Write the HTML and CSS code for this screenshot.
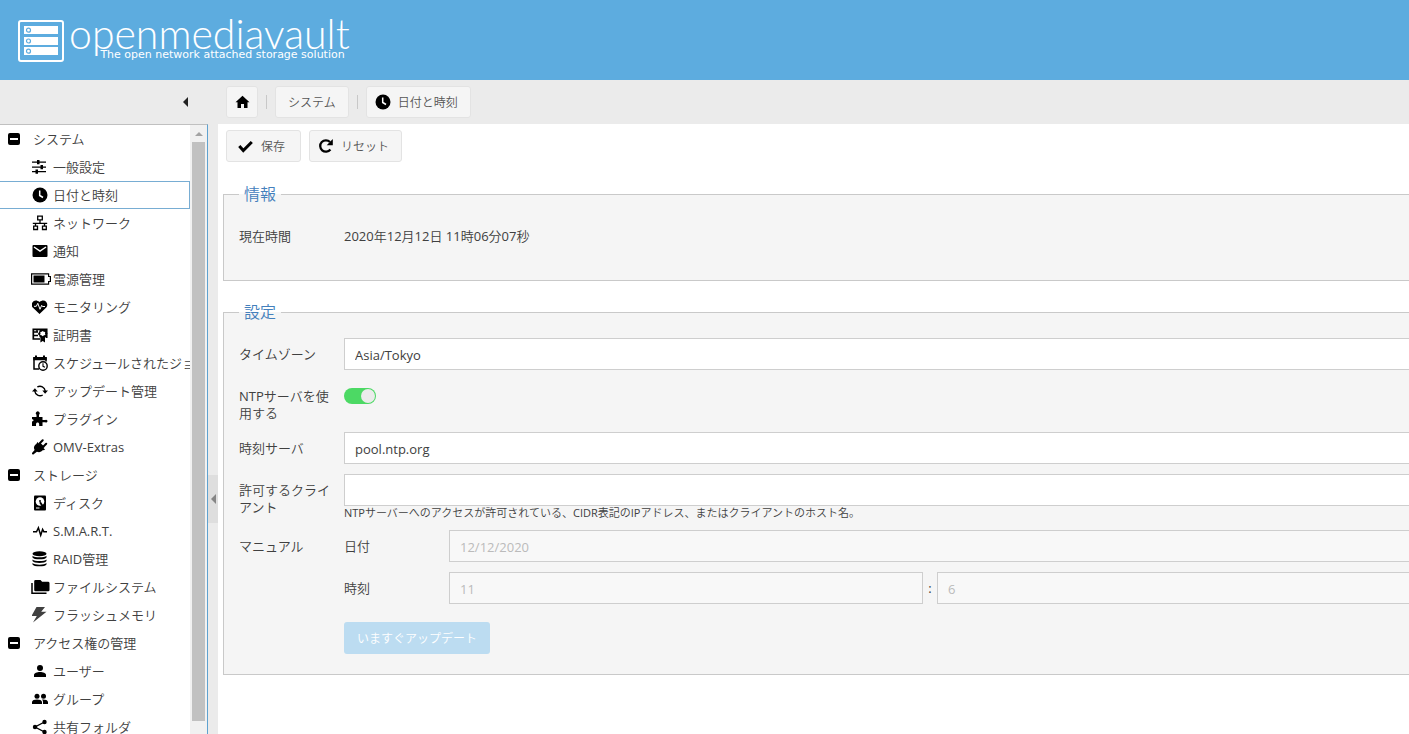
FILE: index.html
```html
<!DOCTYPE html>
<html lang="ja">
<head>
<meta charset="utf-8">
<meta name="viewport" content="width=device-width, initial-scale=1">
<title>openmediavault</title>
<link rel="stylesheet" href="styles.css">
</head>
<body class="app">
<svg class="sprite" aria-hidden="true">
  <symbol id="i-minus" viewBox="0 0 12 12"><rect width="12" height="12" rx="2"/><path d="M2 5h8v2H2z" fill="#fff"/></symbol>
  <symbol id="i-tune" viewBox="0 0 16 16"><path d="M0 2.500h5V1h2.500v1.500H14v1.200H7.500v1.500H5V3.700H0zM0 7.500h8.500V6H11v1.500h3v1.200h-3v1.500H8.500V8.700H0zM0 12h3.500v-1.500H6V12h8v1.200H6v1.500H3.500v-1.500H0z"/></symbol>
  <symbol id="i-clock" viewBox="0 0 16 16"><circle cx="8" cy="8" r="7.500"/><path d="M7.700 3.500v5l3.300 2" fill="none" stroke="#fff" stroke-width="1.500"/></symbol>
  <symbol id="i-network" viewBox="0 0 16 16"><path d="M5.700 1.200h4.600v3.600H5.700zM1.700 11.200h3.800v3.300H1.700zM10.500 11.200h3.800v3.300h-3.800zM8 5v3M.8 8.300h14.400M3.500 8.300V11M12.500 8.300V11" fill="none" stroke="#000" stroke-width="1.300"/></symbol>
  <symbol id="i-mail" viewBox="0 0 16 16"><rect x=".5" y="2" width="15" height="12" rx="1"/><path d="M2 4l6 4 6-4" fill="none" stroke="#fff" stroke-width="1.500"/></symbol>
  <symbol id="i-battery" viewBox="0 0 20 16"><path d="M.6 2.800h17v2.700h1.800v5h-1.800v2.700H.6z" fill="none" stroke="#000" stroke-width="1.200"/><path d="M2.500 4.500h11v7h-11z"/></symbol>
  <symbol id="i-heart" viewBox="0 0 16 16"><path d="M7.500 15L.7 8.600C-2.500 4.500 2.500-1.500 7.500 3c5-4.500 10 1.500 6.800 5.600z"/><path d="M2 7.300h2.300l1.500-3 2.200 6 1.700-4 .8 1.200H13" fill="none" stroke="#fff" stroke-width="1"/></symbol>
  <symbol id="i-cert" viewBox="0 0 16 16"><path d="M8 12H1.300V2.300h13.400V11" fill="none" stroke="#000" stroke-width="1.700"/><path d="M2 5h4M2 8.500h4M5 3v2" stroke="#000" stroke-width="1.500"/><path d="M10.500 2l1.500 1 1.800-.2.500 1.800 1.200 1.900-1.200 1.400-.4 2.300-.9.300V15.500L10.700 14l-2.300 1.500v-5l-.8-.3-.3-1.800L5.800 7l1.300-1.900.6-2 1.700-.1z"/><path d="M10.600 4l1.200.8 1.400.3-.2 1.500.4 1.300-1.400.4-1.300.9-1.200-.9-1.400-.4.400-1.300-.2-1.500 1.400-.3z" fill="#fff"/></symbol>
  <symbol id="i-schedule" viewBox="0 0 16 16"><path d="M7 14H2V3h12v3.500" fill="none" stroke="#000" stroke-width="1.500"/><path d="M1.300 2h13.400v3.300H1.300zM3 .5h2v3H3zM11 .5h2v3h-2z"/><circle cx="11" cy="11" r="4.200" fill="#fff" stroke="#000" stroke-width="1.400"/><path d="M11 8.300v3l2 1" fill="none" stroke="#000" stroke-width="1.100"/></symbol>
  <symbol id="i-sync" viewBox="0 0 16 16"><path d="M5.300 4a5.200 5.200 0 0 1 7.900 4M10.700 12a5.200 5.200 0 0 1-7.900-4" fill="none" stroke="#000" stroke-width="1.400"/><path d="M10.300 7.500H16l-2.900 3.300zM0 8.500h5.700L2.900 5.200z"/></symbol>
  <symbol id="i-plugin" viewBox="0 0 16 16"><path d="M0 6h4.500V3.700A1.900 1.900 0 1 1 7 3.700V6h3.500v3h2.700a1.400 1.400 0 1 1 0 2.200h-2.700V15H7.200v-1.500c0-2.600-3.200-2.600-3.200 0V15H0v-4.500c2 0 2-2.300 0-2.300z"/></symbol>
  <symbol id="i-plug" viewBox="0 0 16 16"><path d="M5.500 3l7.500 7.500-1.100.8-1-.2c-1.800 2.200-4 2.500-6 1.600L1 15.700-.3 14.400l2.900-3.400c-1.300-2-.6-4.500 1.700-6z"/><path d="M6.500 5l4.500 4.500 1.500-1.500-4.500-4.500z"/><path d="M8 4L10.700 1.300M11.500 7.500L14.200 4.800" stroke="#000" stroke-width="2" stroke-linecap="round"/></symbol>
  <symbol id="i-disk" viewBox="0 0 16 16"><rect x="2" y=".5" width="12" height="15" rx="1"/><circle cx="8" cy="6.500" r="4.300" fill="#fff"/><circle cx="8" cy="6" r="1"/><path d="M8 7.300l3.500 5" stroke="#000" stroke-width="2"/><path d="M4 13h3.500" stroke="#fff"/></symbol>
  <symbol id="i-pulse" viewBox="0 0 16 16"><path d="M1 8.700h3.500l1.900-4 2.300 7.500 1.900-5.800 1.200 2.300H15" fill="none" stroke="#000" stroke-width="1.500"/></symbol>
  <symbol id="i-db" viewBox="0 0 16 16"><ellipse cx="7.500" cy="2.800" rx="7" ry="2.500"/><path d="M.5 4.700c2 2.200 12 2.200 14 0v1.700C13.500 9 1.500 9 .5 6.400zM.5 8.400c2 2.200 12 2.200 14 0v1.700c-1 2.600-13 2.600-14 0zM.5 12.100c2 2.200 12 2.200 14 0v1.300c-1 2.600-13 2.600-14 0z"/></symbol>
  <symbol id="i-folders" viewBox="0 0 20 16"><path d="M4.500 1h5l1.600 1.700H17A1.500 1.500 0 0 1 18.500 4v7a1.300 1.300 0 0 1-1.300 1.300H4.500A1.300 1.300 0 0 1 3.200 11V2.300A1.300 1.300 0 0 1 4.500 1z"/><path d="M1 4v10.300h14.500" fill="none" stroke="#000" stroke-width="1.500"/></symbol>
  <symbol id="i-flash" viewBox="0 0 16 16"><path d="M4.500 0h8.500L9.200 4.800h5.300L1 15.500 4.800 9H-.5z" fill="#404040"/></symbol>
  <symbol id="i-user" viewBox="0 0 16 16"><circle cx="8" cy="5" r="3"/><path d="M2 14v-2c0-4 12-4 12 0v2z"/></symbol>
  <symbol id="i-users" viewBox="0 0 16 16"><circle cx="5" cy="5.300" r="2.500"/><circle cx="11.500" cy="5.300" r="2.500"/><path d="M0 13v-2c0-3.300 10-3.300 10 0v2zM11 13v-2.200c0-.9-.4-1.600-1-2.200 2.500-.3 6 .5 6 2.400v2z"/></symbol>
  <symbol id="i-share" viewBox="0 0 16 16"><circle cx="12.500" cy="3" r="2.200"/><circle cx="3" cy="8" r="2.200"/><circle cx="12.500" cy="13" r="2.200"/><path d="M12.500 3L3 8l9.500 5" fill="none" stroke="#000" stroke-width="1.400"/></symbol>
  <symbol id="i-home" viewBox="0 0 16 16"><path d="M8.500 1.800l7 6.500h-2V14H10v-4H7v4H3.500V8.300h-2z"/></symbol>
  <symbol id="i-check" viewBox="0 0 16 16"><path d="M1.300 8l4 4.500L13.800 4" fill="none" stroke="#000" stroke-width="3"/></symbol>
  <symbol id="i-reset" viewBox="0 0 16 16"><path d="M12.400 11.500A5.700 5.700 0 1 1 12 4" fill="none" stroke="#000" stroke-width="2.300"/><path d="M14.800 1v6.300H8.700z"/></symbol>
  <symbol id="i-left" viewBox="0 0 5 10"><path d="M5 0v10L0 5z"/></symbol>
</svg>

<header class="banner">
  <svg class="logo" viewBox="0 0 46 42" role="img" aria-label="openmediavault logo">
    <rect x="1" y="1" width="44" height="40" rx="2" fill="none" stroke="#fff" stroke-width="2"/>
    <path d="M6 6h34v8H6zM6 17h34v8H6zM6 27h34v8H6z" fill="#fff"/>
    <g fill="none" stroke="#5dacdf" stroke-width="1.200"><circle cx="10.500" cy="10.200" r="2"/><circle cx="10.500" cy="21" r="2"/><circle cx="10.500" cy="31.200" r="2"/></g>
  </svg>
  <div class="brand">
    <span class="brand-name">openmediavault</span>
    <span class="brand-tag">The open network attached storage solution</span>
  </div>
</header>

<div class="body">
  <aside class="side">
    <div class="side-head"><button class="bare" type="button" aria-label="ナビゲーションを折りたたむ"><svg class="arrow"><use href="#i-left"/></svg></button></div>
    <div class="side-body">
      <nav class="tree" aria-label="ナビゲーション">
        <a class="group" href="#"><svg class="box"><use href="#i-minus"/></svg>システム</a>
        <a class="item" href="#"><svg class="icon"><use href="#i-tune"/></svg>一般設定</a>
        <a class="item selected" href="#" aria-current="page"><svg class="icon"><use href="#i-clock"/></svg>日付と時刻</a>
        <a class="item" href="#"><svg class="icon"><use href="#i-network"/></svg>ネットワーク</a>
        <a class="item" href="#"><svg class="icon"><use href="#i-mail"/></svg>通知</a>
        <a class="item" href="#"><svg class="icon wide"><use href="#i-battery"/></svg>電源管理</a>
        <a class="item" href="#"><svg class="icon"><use href="#i-heart"/></svg>モニタリング</a>
        <a class="item" href="#"><svg class="icon"><use href="#i-cert"/></svg>証明書</a>
        <a class="item" href="#"><svg class="icon"><use href="#i-schedule"/></svg>スケジュールされたジョブ</a>
        <a class="item" href="#"><svg class="icon"><use href="#i-sync"/></svg>アップデート管理</a>
        <a class="item" href="#"><svg class="icon"><use href="#i-plugin"/></svg>プラグイン</a>
        <a class="item" href="#"><svg class="icon"><use href="#i-plug"/></svg>OMV-Extras</a>
        <a class="group" href="#"><svg class="box"><use href="#i-minus"/></svg>ストレージ</a>
        <a class="item" href="#"><svg class="icon"><use href="#i-disk"/></svg>ディスク</a>
        <a class="item" href="#"><svg class="icon"><use href="#i-pulse"/></svg>S.M.A.R.T.</a>
        <a class="item" href="#"><svg class="icon"><use href="#i-db"/></svg>RAID管理</a>
        <a class="item" href="#"><svg class="icon wide"><use href="#i-folders"/></svg>ファイルシステム</a>
        <a class="item" href="#"><svg class="icon"><use href="#i-flash"/></svg>フラッシュメモリ</a>
        <a class="group" href="#"><svg class="box"><use href="#i-minus"/></svg>アクセス権の管理</a>
        <a class="item" href="#"><svg class="icon"><use href="#i-user"/></svg>ユーザー</a>
        <a class="item" href="#"><svg class="icon"><use href="#i-users"/></svg>グループ</a>
        <a class="item" href="#"><svg class="icon"><use href="#i-share"/></svg>共有フォルダ</a>
      </nav>
      <div class="scroll" aria-hidden="true"><div class="scroll-up"></div><div class="scroll-thumb"></div></div>
    </div>
  </aside>
  <div class="splitter"><button class="splitter-handle" type="button" aria-label="パネルを折りたたむ"><svg class="arrow"><use href="#i-left"/></svg></button></div>

  <main class="main">
    <nav class="crumbs" aria-label="パンくず">
      <button class="btn home" type="button" aria-label="ホーム"><svg class="glyph"><use href="#i-home"/></svg></button>
      <span class="sep"></span>
      <button class="btn plain" type="button">システム</button>
      <span class="sep"></span>
      <button class="btn" type="button"><svg class="glyph"><use href="#i-clock"/></svg>日付と時刻</button>
    </nav>
    <form class="panel">
      <div class="toolbar">
        <button class="btn" type="button"><svg class="glyph"><use href="#i-check"/></svg>保存</button>
        <button class="btn" type="button"><svg class="glyph"><use href="#i-reset"/></svg>リセット</button>
      </div>
      <div class="sheet">
        <fieldset class="set">
          <legend>情報</legend>
          <div class="row info"><span class="label">現在時間</span><span class="value">2020年12月12日 11時06分07秒</span></div>
        </fieldset>
        <fieldset class="set">
          <legend>設定</legend>
          <div class="row"><label class="label" for="tz">タイムゾーン</label><select class="input" id="tz"><option>Asia/Tokyo</option></select></div>
          <div class="row"><label class="label" for="ntp">NTPサーバを使用する</label><input class="switch" id="ntp" type="checkbox" role="switch" checked></div>
          <div class="row"><label class="label" for="server">時刻サーバ</label><input class="input" id="server" type="text" value="pool.ntp.org"></div>
          <div class="row"><label class="label" for="clients">許可するクライアント</label>
            <div class="field"><input class="input" id="clients" type="text" aria-describedby="clients-help"><p class="help" id="clients-help">NTPサーバーへのアクセスが許可されている、CIDR表記のIPアドレス、またはクライアントのホスト名。</p></div></div>
          <div class="row"><span class="label">マニュアル</span>
            <div class="field manual">
              <div class="row"><label class="label" for="date">日付</label><input class="input" id="date" type="text" value="12/12/2020" disabled></div>
              <div class="row"><label class="label" for="hour">時刻</label>
                <div class="time"><input class="input" id="hour" type="text" value="11" disabled><span class="colon">:</span><input class="input" type="text" value="6" aria-label="分" disabled></div></div>
              <button class="update" type="button" disabled>いますぐアップデート</button>
            </div></div>
        </fieldset>
      </div>
    </form>
  </main>
</div>
</body>
</html>
```

FILE: styles.css
```css
* { box-sizing: border-box; }

.app {
  margin: 0;
  height: 100vh;
  display: flex;
  flex-direction: column;
  overflow: hidden;
  background: #ebebeb;
  color: #404040;
  font: 13px/17px "Open Sans", "Noto Sans CJK JP DemiLight", "Noto Sans CJK JP Light", "Noto Sans CJK JP", sans-serif;
}

button, input, select { font: inherit; color: inherit; }
.sprite { display: none; }

.banner {
  flex: none;
  height: 80px;
  padding: 2px 18px 0;
  display: flex;
  align-items: center;
  gap: 5px;
  background: #5dacdf;
  color: #fff;
}
.logo { width: 46px; height: 42px; }
.brand { display: flex; flex-direction: column; align-items: flex-end; }
.brand-name { font: 300 41px/28px Lato, sans-serif; }
.brand-tag { font: 11px/14px "DejaVu Sans", sans-serif; padding-right: 5px; }

.body { flex: 1; min-height: 0; display: flex; }

.side { flex: none; width: 208px; display: flex; flex-direction: column; }
.side-head {
  flex: none;
  height: 44px;
  padding-right: 20px;
  display: flex;
  align-items: center;
  justify-content: flex-end;
}
.bare { display: flex; padding: 0; border: 0; background: none; }
.arrow { width: 5px; height: 10px; fill: #222; }
.side-body {
  flex: 1;
  min-height: 0;
  display: flex;
  border-top: 1px solid #c0c0c0;
  border-right: 1px solid #5fa2d0;
  background: #fff;
}
.tree { flex: 1; min-width: 0; overflow: hidden; }
.group, .item {
  height: 28px;
  display: flex;
  align-items: center;
  color: inherit;
  text-decoration: none;
  white-space: nowrap;
}
.group { padding-left: 8px; gap: 13px; }
.item { padding-left: 32px; gap: 5px; }
.box { flex: none; width: 12px; height: 12px; }
.icon { flex: none; width: 16px; height: 16px; overflow: visible; }
.icon.wide { width: 20px; margin: 0 -3px 0 -1px; }
.selected { border: 1px solid #78add3; border-left: 0; }

.scroll {
  flex: none;
  width: 17px;
  padding: 0 2px 13px;
  display: flex;
  flex-direction: column;
  background: #f1f1f1;
}
.scroll-up {
  height: 17px;
  display: flex;
  align-items: center;
  justify-content: center;
}
.scroll-up::before {
  content: "";
  border: 4px solid transparent;
  border-top: 0;
  border-bottom-color: #a3a3a3;
}
.scroll-thumb { flex: 1; background: #c1c1c1; }

.splitter {
  flex: none;
  width: 10px;
  padding-top: 184px;
  display: flex;
  align-items: center;
}
.splitter-handle {
  width: 10px;
  height: 48px;
  padding: 0;
  display: flex;
  align-items: center;
  justify-content: center;
  border: 0;
  background: #dedede;
}
.splitter-handle .arrow { fill: #858585; }

.main { flex: 1; min-width: 0; display: flex; flex-direction: column; }
.crumbs { flex: none; height: 44px; padding-left: 8px; display: flex; align-items: center; gap: 8px; }
.sep { width: 1px; height: 14px; background: #c8c8c8; }
.btn {
  height: 32px;
  min-width: 75px;
  padding: 0 12px 0 8px;
  display: flex;
  align-items: center;
  justify-content: center;
  gap: 7px;
  border: 1px solid #e3e3e3;
  border-radius: 3px;
  background: #f5f5f5;
  color: #555;
  font-size: 12px;
}
.btn.home { min-width: 32px; padding: 0 7px; }
.btn.plain { min-width: 0; padding: 0 12px; }
.glyph { flex: none; width: 16px; height: 16px; }

.panel { flex: 1; min-height: 0; overflow: hidden; background: #fff; }
.toolbar { height: 44px; padding: 0 8px; display: flex; align-items: center; gap: 8px; }
.sheet { margin-right: -18px; padding: 14px 0 0 5px; }

.set {
  min-width: 0;
  margin: 0 0 19px;
  padding: 14px 15px 20px;
  border: 1px solid #c9c9c9;
  background: #f5f5f5;
}
.set legend { padding: 0 5px; color: #4480bc; font-size: 16px; line-height: 24px; }
.row { display: flex; margin-bottom: 10px; }
.row:last-child { margin-bottom: 0; }
.info { min-height: 40px; }
.label { flex: none; width: 105px; padding: 8px 5px 0 0; }
.value { padding-top: 8px; }
.input {
  flex: 1;
  display: block;
  width: 100%;
  min-width: 0;
  height: 32px;
  margin: 0;
  padding: 2px 10px 0;
  border: 1px solid #cecece;
  border-radius: 0;
  background: #fff;
  appearance: none;
}
.input:disabled { background: #f8f8f8; color: #bbb; opacity: 1; }
.field { flex: 1; min-width: 0; }
.help { margin: 0; font-size: 11px; line-height: 14px; }
.time { flex: 1; display: flex; }
.colon { width: 14px; padding-top: 8px; text-align: center; }

.switch {
  appearance: none;
  width: 32px;
  height: 16px;
  margin: 8px 0 0;
  padding: 1px;
  display: flex;
  justify-content: flex-end;
  border-radius: 8px;
  background: #4cd964;
}
.switch::before { content: ""; width: 14px; height: 14px; border-radius: 50%; background: #ebebeb; }
.switch:not(:checked) { justify-content: flex-start; background: #c8c8c8; }

.update {
  height: 32px;
  margin-top: 18px;
  padding: 0 13px;
  border: 0;
  border-radius: 3px;
  background: #bcdcf1;
  color: #fff;
  font-size: 12px;
}
.manual .row:nth-child(2) { margin-bottom: 0; }
```
